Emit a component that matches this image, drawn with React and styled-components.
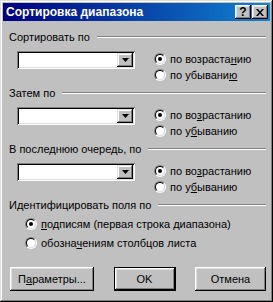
import React from 'react';
import styled, { createGlobalStyle } from 'styled-components';

const GlobalStyle = createGlobalStyle`
  html, body {
    margin: 0;
    padding: 0;
    background: #c0c0c0;
  }
`

const Window = styled.div`
  box-sizing: border-box;
  width: 273px;
  height: 302px;
  padding: 3px;
  background: #c0c0c0;
  box-shadow: inset -1px -1px #000000, inset 1px 1px #dfdfdf,
    inset -2px -2px #808080, inset 2px 2px #ffffff;
  font-family: 'Liberation Sans', Arial, sans-serif;
  font-size: 11px;
  color: #000;
  display: flex;
  flex-direction: column;
`

const TitleBar = styled.div`
  height: 18px;
  display: flex;
  align-items: center;
  padding: 0 2px 0 3px;
  background: linear-gradient(to right, #000080, #1084d0);
`

const TitleText = styled.div`
  flex: 1;
  color: #fff;
  font-weight: bold;
  font-size: 12px;
  white-space: nowrap;
`

const TitleButtons = styled.div`
  display: flex;
  gap: 1px;
`

const CaptionButton = styled.div`
  box-sizing: border-box;
  width: 16px;
  height: 14px;
  display: flex;
  align-items: center;
  justify-content: center;
  background: #c0c0c0;
  box-shadow: inset -1px -1px #000000, inset 1px 1px #ffffff,
    inset -2px -2px #808080, inset 2px 2px #dfdfdf;
  font-weight: bold;
  font-size: 12px;
  line-height: 1;
`

const Content = styled.div`
  flex: 1;
  display: flex;
  flex-direction: column;
  padding: 9px 4px 0 6px;
`

const Section = styled.div`
  display: flex;
  flex-direction: column;
  margin-bottom: 3px;
`

const Heading = styled.div`
  height: 14px;
  display: flex;
  align-items: center;
  gap: 7px;
  white-space: nowrap;
`

const Etched = styled.div`
  flex: 1;
  height: 0;
  border-top: 1px solid #808080;
  border-bottom: 1px solid #ffffff;
`

const SortRow = styled.div`
  display: flex;
  margin-top: 7px;
`

const Combo = styled.div`
  box-sizing: border-box;
  width: 118px;
  height: 18px;
  margin-left: 8px;
  padding: 2px;
  display: flex;
  justify-content: flex-end;
  background: #ffffff;
  box-shadow: inset 1px 1px #808080, inset -1px -1px #ffffff,
    inset 2px 2px #000000, inset -2px -2px #dfdfdf;
`

const DropButton = styled.div`
  box-sizing: border-box;
  width: 16px;
  height: 14px;
  display: flex;
  align-items: center;
  justify-content: center;
  background: #c0c0c0;
  box-shadow: inset -1px -1px #000000, inset 1px 1px #dfdfdf,
    inset -2px -2px #808080, inset 2px 2px #ffffff;
`

const RadioList = styled.div`
  display: flex;
  flex-direction: column;
  gap: ${p => p.$gap || 0}px;
  margin-left: ${p => p.$indent}px;
`

const RadioRow = styled.label`
  height: 16px;
  display: flex;
  align-items: center;
  gap: 4px;
  white-space: nowrap;
`

const RadioOuter = styled.span`
  box-sizing: border-box;
  width: 12px;
  height: 12px;
  border-radius: 50%;
  border: 1px solid;
  border-color: #808080 #ffffff #ffffff #808080;
  display: flex;
`

const RadioInner = styled.span`
  box-sizing: border-box;
  width: 10px;
  height: 10px;
  border-radius: 50%;
  border: 1px solid;
  border-color: #000000 #dfdfdf #dfdfdf #000000;
  background: #ffffff;
  display: flex;
  align-items: center;
  justify-content: center;

  &::after {
    content: '';
    display: ${p => (p.$checked ? 'block' : 'none')};
    width: 4px;
    height: 4px;
    border-radius: 50%;
    background: #000;
  }
`

const Accel = styled.span`
  text-decoration: underline;
`

const IdentList = styled(RadioList)`
  margin-top: 4px;
`

const ButtonRow = styled.div`
  display: flex;
  justify-content: space-between;
  margin-top: 13px;
  padding-left: 1px;
`

const Button = styled.div`
  box-sizing: border-box;
  width: ${p => p.$w}px;
  height: 24px;
  display: flex;
  align-items: center;
  justify-content: center;
  background: #c0c0c0;
  box-shadow: ${p =>
    p.$default
      ? 'inset 0 0 0 1px #000000, inset -2px -2px #000000, inset 2px 2px #ffffff, inset -3px -3px #808080, inset 3px 3px #dfdfdf'
      : 'inset -1px -1px #000000, inset 1px 1px #ffffff, inset -2px -2px #808080, inset 2px 2px #dfdfdf'};
`

const Radio = ({ checked, children }) => (
  <RadioRow>
    <RadioOuter>
      <RadioInner $checked={checked} />
    </RadioOuter>
    <span>{children}</span>
  </RadioRow>
)

const SortSection = ({ title, first, second }) => (
  <Section>
    <Heading>
      <span>{title}</span>
      <Etched />
    </Heading>
    <SortRow>
      <Combo>
        <DropButton>
          <svg width="7" height="4" viewBox="0 0 7 4">
            <path d="M0 0h7L3.5 4z" fill="#000" />
          </svg>
        </DropButton>
      </Combo>
      <RadioList $indent={19}>
        <Radio checked>{first}</Radio>
        <Radio>{second}</Radio>
      </RadioList>
    </SortRow>
  </Section>
)

const App = () => (
  <>
    <GlobalStyle />
    <Window>
      <TitleBar>
        <TitleText>Сортировка диапазона</TitleText>
        <TitleButtons>
          <CaptionButton>?</CaptionButton>
          <CaptionButton>
            <svg width="8" height="7" viewBox="0 0 8 7">
              <path d="M0 0h2l2 2.5L6 0h2L5 3.5 8 7H6L4 4.5 2 7H0l3-3.5z" fill="#000" />
            </svg>
          </CaptionButton>
        </TitleButtons>
      </TitleBar>
      <Content>
        <SortSection
          title="Сортировать по"
          first={<>по возраста<Accel>н</Accel>ию</>}
          second={<>по убывани<Accel>ю</Accel></>}
        />
        <SortSection
          title="Затем по"
          first={<>по во<Accel>з</Accel>растанию</>}
          second={<>по у<Accel>б</Accel>ыванию</>}
        />
        <SortSection
          title="В последнюю очередь, по"
          first={<>по во<Accel>з</Accel>растанию</>}
          second={<>по у<Accel>б</Accel>ыванию</>}
        />
        <Section>
          <Heading>
            <span>Идентифицировать поля по</span>
            <Etched />
          </Heading>
          <IdentList $indent={16} $gap={3}>
            <Radio checked><Accel>п</Accel>одписям (первая строка диапазона)</Radio>
            <Radio>обозна<Accel>ч</Accel>ениям столбцов листа</Radio>
          </IdentList>
        </Section>
        <ButtonRow>
          <Button $w={84}>П<Accel>а</Accel>раметры...</Button>
          <Button $w={62} $default>OK</Button>
          <Button $w={71}>Отмена</Button>
        </ButtonRow>
      </Content>
    </Window>
  </>
);

export default App;
